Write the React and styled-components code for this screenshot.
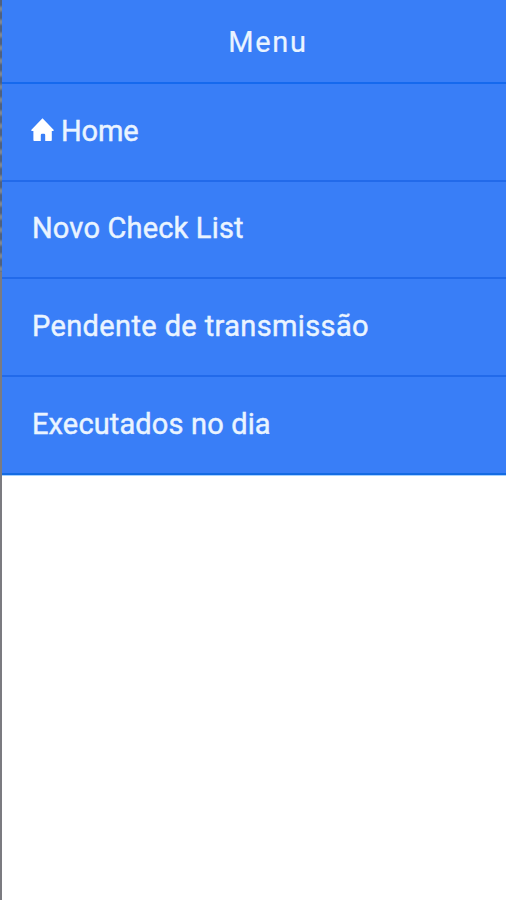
import React from "react";
import styled, { createGlobalStyle } from "styled-components";

const GlobalStyle = createGlobalStyle`
  * { box-sizing: border-box; }
  body { margin: 0; background: #fff; }
`;

const Screen = styled.div`
  display: flex;
  width: 100%;
  height: 100vh;
  overflow: hidden;
  font-family: Roboto, "Liberation Sans", sans-serif;
  color: #eaf4ff;
`;

const PageEdge = styled.div`
  flex: 0 0 2px;
  background:
    repeating-linear-gradient(#50617e 0 5px, #7f8791 8px 10px, #50617e 13px) 0 0 / 2px 272px no-repeat,
    #7b7b80;
`;

const Drawer = styled.aside`
  flex: 1;
  min-width: 0;
  background: #fff;
`;

const Header = styled.header`
  display: flex;
  justify-content: center;
  height: 84px;
  padding: 25px 0 0 28px;
  background: #397ef7;
  border-bottom: 2px solid #1569ee;
`;

const Title = styled.h1`
  margin: 0;
  font-size: 29px;
  font-weight: 400;
  line-height: 34px;
  letter-spacing: 1.7px;
  -webkit-text-stroke: 0.2px currentColor;
`;

const MenuList = styled.nav`
  display: grid;
  grid-template-rows: 98px 97px 98px 98px;
  border-bottom: 1px solid #a5d2ff;
`;

const MenuItem = styled.a`
  display: flex;
  align-items: flex-start;
  padding: ${({ $top }) => $top}px 0 0 30px;
  background: #397ef7;
  border-bottom: 2px solid ${({ $last }) => ($last ? "#146be3" : "#226aea")};
`;

const Label = styled.span`
  font-size: 29px;
  font-weight: 400;
  line-height: 34px;
  letter-spacing: ${({ $tracking }) => $tracking}px;
  -webkit-text-stroke: 0.45px currentColor;
  white-space: nowrap;
`;

const HomeIcon = styled.svg`
  width: 23px;
  height: 23px;
  margin: 4px 7px 0 -1px;
  fill: #fff;
`;

const items = [
  { label: "Home", tracking: -0.15, top: 30, home: true },
  { label: "Novo Check List", tracking: 0.18, top: 29 },
  { label: "Pendente de transmissão", tracking: 0.37, top: 30 },
  { label: "Executados no dia", tracking: 0.14, top: 30 },
];

export default function App() {
  return (
    <>
      <GlobalStyle />
      <Screen>
        <PageEdge />
        <Drawer>
          <Header>
            <Title>Menu</Title>
          </Header>
          <MenuList>
            {items.map(({ label, tracking, top, home }, i) => (
              <MenuItem key={label} $top={top} $last={i === items.length - 1}>
                {home && (
                  <HomeIcon viewBox="0 0 23 23" aria-hidden="true">
                    <path d="M11.5 0.3 22.8 12Q23 13 21.8 13H20.8V22.2Q20.8 23 20 23H14.2V17Q14.2 15.8 13 15.8H11Q9.8 15.8 9.8 17V23H3.2Q2.4 23 2.4 22.2V13H1.2Q0 13 0.2 12Z" />
                  </HomeIcon>
                )}
                <Label $tracking={tracking}>{label}</Label>
              </MenuItem>
            ))}
          </MenuList>
        </Drawer>
      </Screen>
    </>
  );
}
